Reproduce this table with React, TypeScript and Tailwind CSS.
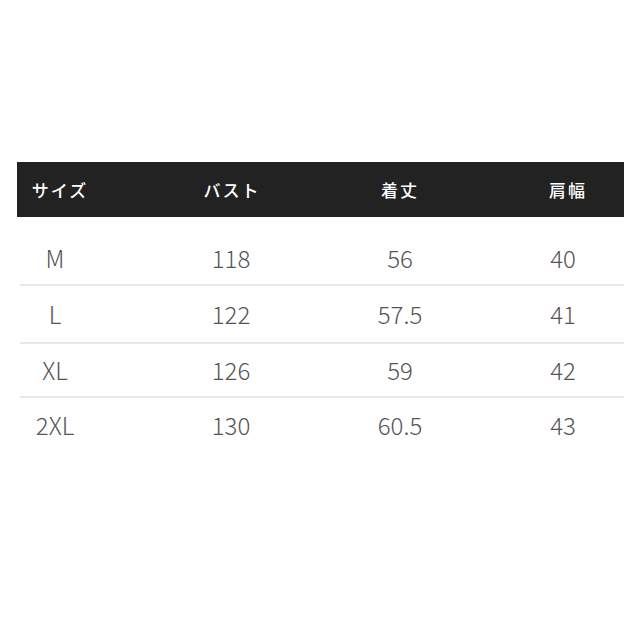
const HEAD = ['サイズ', 'バスト', '着丈', '肩幅'];

const ROWS = [
  ['M', '118', '56', '40'],
  ['L', '122', '57.5', '41'],
  ['XL', '126', '59', '42'],
  ['2XL', '130', '60.5', '43'],
];

const ROW_H = ['h-[69px] pt-[15px]', 'h-[58px]', 'h-[54px]', 'h-[54px]'];

// column boxes (fixed width, centred text)
const headCols = ['ml-[3px] w-[80px]', 'ml-[92px] w-[80px]', 'ml-[88px] w-[80px]', 'ml-[88px] w-[80px]'];
const cellCols = ['ml-0 w-[70px]', 'ml-[106px] w-[70px]', 'ml-[99px] w-[70px]', 'ml-[93px] w-[70px]'];

export default function App() {
  return (
    <div className="w-[640px] h-[640px] bg-white pt-[162px]" style={{ fontFamily: '"Noto Sans CJK JP", "Noto Sans", sans-serif' }}>
      <div className="ml-[17px] w-[607px]">
        <div className="flex items-center h-[55px] bg-[#222222] text-white text-[17px] font-medium tracking-[2px]">
          {HEAD.map((h, i) => (
            <div key={h} className={`${headCols[i]} text-center`}>{h}</div>
          ))}
        </div>

        {ROWS.map((r, ri) => (
          <div
            key={r[0]}
            className={`flex items-center ml-[3px] text-[24px] font-light text-[#555555] ${ROW_H[ri]} ${
              ri < ROWS.length - 1 ? 'border-b-2 border-[#e8e8e8]' : ''
            }`}
          >
            {r.map((c, i) => (
              <div key={i} className={`${cellCols[i]} text-center`}>{c}</div>
            ))}
          </div>
        ))}
      </div>
    </div>
  );
}
